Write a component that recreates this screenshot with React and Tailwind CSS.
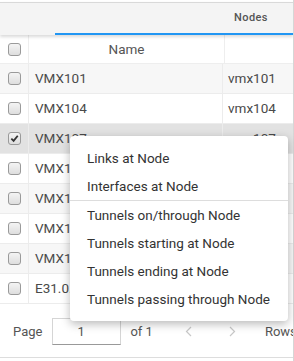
import React from "react";

const rows = [
  { name: "VMX101", host: "vmx101" },
  { name: "VMX104", host: "vmx104" },
  { name: "VMX107", host: "vmx107", selected: true },
  { name: "VMX108", host: "vmx108" },
  { name: "VMX109", host: "vmx109" },
  { name: "VMX110", host: "vmx110" },
  { name: "VMX111", host: "vmx111" },
  { name: "E31.0.0.1", host: "e31" },
];

function Box({ checked }) {
  return (
    <div className="w-[13px] h-[13px] rounded-[3px] border border-[#9a9a9a] bg-gradient-to-b from-[#f4f4f4] to-[#dedede] flex items-center justify-center">
      {checked && (
        <svg width="9" height="9" viewBox="0 0 10 10">
          <path d="M1.5 5.2 L4 7.6 L8.6 2" fill="none" stroke="#333" strokeWidth="2" />
        </svg>
      )}
    </div>
  );
}

function Chevron({ dir }) {
  return (
    <svg width="7" height="11" viewBox="0 0 7 11">
      <path
        d={dir === "left" ? "M6 1 L1.5 5.5 L6 10" : "M1 1 L5.5 5.5 L1 10"}
        fill="none"
        stroke="#c8c8c8"
        strokeWidth="1.2"
      />
    </svg>
  );
}

const menu = [
  "Links at Node",
  "Interfaces at Node",
  null,
  "Tunnels on/through Node",
  "Tunnels starting at Node",
  "Tunnels ending at Node",
  "Tunnels passing through Node",
];

export default function App() {
  return (
    <div className="relative w-[294px] h-[361px] overflow-hidden bg-white text-[13px] text-[#555] font-['Roboto',sans-serif]">
      <div className="w-[294px] border-r border-[#d6d6d6] h-full overflow-hidden">
        {/* tabs */}
        <div className="mt-[2px] border-t border-[#d9d9d9] bg-[#f4f4f4] h-[33px] flex shadow-[0_2px_3px_rgba(0,0,0,0.15)] relative z-10">
          <div className="w-[55px] shrink-0" />
          <div className="w-[392px] shrink-0 border-b-[2px] border-[#2196f3] flex items-center justify-center text-[11px] font-medium tracking-[0.4px] text-[#555]">
            Nodes
          </div>
        </div>

        {/* table */}
        <div className="w-[600px]">
          <div className="flex h-[29px] border-b border-[#eee] text-[#555] text-[13.5px]">
            <div className="w-[29px] shrink-0 flex items-center justify-center border-r border-[#eee]">
              <Box />
            </div>
            <div className="w-[196px] shrink-0 flex items-center justify-center border-r border-[#eee]">Name</div>
            <div className="w-[190px] shrink-0 flex items-center justify-center pl-[44px]">Hostname</div>
          </div>
          {rows.map((r, i) => (
            <div
              key={r.name}
              className={
                "flex h-[30px] border-b border-[#ececec] text-[13.5px] " +
                (r.selected ? "bg-[#e2e2e2]" : i % 2 === 0 ? "bg-[#f7f7f7]" : "bg-white")
              }
            >
              <div className="w-[29px] shrink-0 flex items-center justify-center border-r border-[#ececec]">
                <Box checked={r.selected} />
              </div>
              <div className="w-[194px] shrink-0 flex items-center pl-[6px] border-r border-[#ececec] text-[#4a4a4a]">{r.name}</div>
              <div className="w-[190px] shrink-0 flex items-center pl-[5px] text-[#4a4a4a]">{r.host}</div>
            </div>
          ))}
        </div>

        {/* footer */}
        <div className="w-[340px] h-[54px] border-b border-[#ddd] flex items-center pl-[13px] pt-[2px] whitespace-nowrap">
          <span className="shrink-0">Page</span>
          <div className="shrink-0 ml-[10px] w-[69px] h-[27px] border border-[#d5d5d5] border-b-[#999] flex items-center pl-[24px]">1</div>
          <span className="shrink-0 ml-[9px]">of 1</span>
          <span className="shrink-0 ml-[32px] flex"><Chevron dir="left" /></span>
          <span className="shrink-0 ml-[37px] flex"><Chevron dir="right" /></span>
          <span className="shrink-0 ml-[29px]">Rows</span>
        </div>
      </div>

      {/* context menu */}
      <div className="absolute left-[70px] top-[136px] w-[218px] bg-white rounded-[4px] shadow-[0_3px_10px_rgba(0,0,0,0.28)] py-[8px] z-20 text-[#333] text-[13.5px]">
        {menu.map((m, i) =>
          m === null ? (
            <div key={i} className="h-px bg-[#ddd]" />
          ) : (
            <div key={i} className="h-[28px] flex items-center pl-[17px] whitespace-nowrap">{m}</div>
          )
        )}
      </div>
    </div>
  );
}
